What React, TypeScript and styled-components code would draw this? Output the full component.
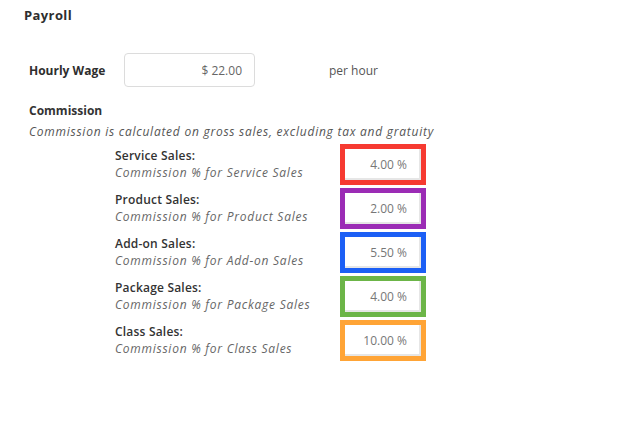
import React from 'react'
import styled, { createGlobalStyle } from 'styled-components'

const GlobalStyle = createGlobalStyle`
  body {
    margin: 0;
    background: #ffffff;
    font-family: "Open Sans", "Liberation Sans", sans-serif;
    color: #333333;
  }
`

const rates = [
    { name: 'Service Sales', value: '4.00 %', color: '#f63a31' },
    { name: 'Product Sales', value: '2.00 %', color: '#9b2cb5' },
    { name: 'Add-on Sales', value: '5.50 %', color: '#1c5ff5' },
    { name: 'Package Sales', value: '4.00 %', color: '#6cb548' },
    { name: 'Class Sales', value: '10.00 %', color: '#ffa436' },
]

const App = () => {
    return (
        <>
            <GlobalStyle />
            <Page>
                <Title>Payroll</Title>

                <WageRow>
                    <WageLabel>Hourly Wage</WageLabel>
                    <WageInput>$ 22.00</WageInput>
                    <Unit>per hour</Unit>
                </WageRow>

                <Heading>Commission</Heading>
                <Note>Commission is calculated on gross sales, excluding tax and gratuity</Note>

                <RateList>
                    {rates.map((r) => (
                        <RateRow key={r.name}>
                            <RateText>
                                <RateName>{r.name}:</RateName>
                                <RateHint>Commission % for {r.name}</RateHint>
                            </RateText>
                            <Frame color={r.color}>
                                <RateInput>{r.value}</RateInput>
                            </Frame>
                        </RateRow>
                    ))}
                </RateList>
            </Page>
        </>
    )
}
export default App

const Page = styled.div`
width: 633px;
height: 437px;
box-sizing: border-box;
padding: 6px 0 0 0;
`

const Title = styled.div`
margin-left: 24px;
font-size: 13px;
font-weight: 700;
letter-spacing: 0.4px;
color: #2e2e2e;
line-height: 18px;
`

const WageRow = styled.div`
display: flex;
align-items: center;
margin: 29px 0 0 29px;
`

const WageLabel = styled.div`
width: 95px;
font-size: 12px;
font-weight: 700;
color: #2e2e2e;
`

const WageInput = styled.div`
box-sizing: border-box;
width: 131px;
height: 34px;
border: 1px solid #dcdcdc;
border-radius: 4px;
display: flex;
align-items: center;
justify-content: flex-end;
padding-right: 12px;
font-size: 12px;
color: #666666;
`

const Unit = styled.div`
margin-left: 74px;
font-size: 12px;
color: #555555;
`

const Heading = styled.div`
margin: 15px 0 0 29px;
font-size: 12px;
font-weight: 700;
color: #333333;
line-height: 17px;
`

const Note = styled.div`
margin: 4px 0 0 29px;
font-size: 12px;
font-style: italic;
letter-spacing: 0.75px;
color: #555555;
line-height: 17px;
`

const RateList = styled.div`
display: flex;
flex-direction: column;
gap: 3px;
margin: 4px 0 0 115px;
`

const RateRow = styled.div`
display: flex;
align-items: center;
height: 41px;
`

const RateText = styled.div`
width: 225px;
display: flex;
flex-direction: column;
`

const RateName = styled.div`
font-size: 12px;
font-weight: 600;
letter-spacing: 0.2px;
color: #333333;
line-height: 16px;
`

const RateHint = styled.div`
font-size: 12px;
font-style: italic;
letter-spacing: 0.75px;
color: #666666;
line-height: 17px;
`

const Frame = styled.div<{ color: string }>`
box-sizing: border-box;
width: 86px;
height: 41px;
border: 5px solid ${(p) => p.color};
background: #ffffff;
`

const RateInput = styled.div`
box-sizing: border-box;
width: 100%;
height: 100%;
display: flex;
align-items: center;
justify-content: flex-end;
padding-right: 14px;
font-size: 12px;
color: #777777;
box-shadow: inset -2px -2px 0 #e6e6e6;
`
